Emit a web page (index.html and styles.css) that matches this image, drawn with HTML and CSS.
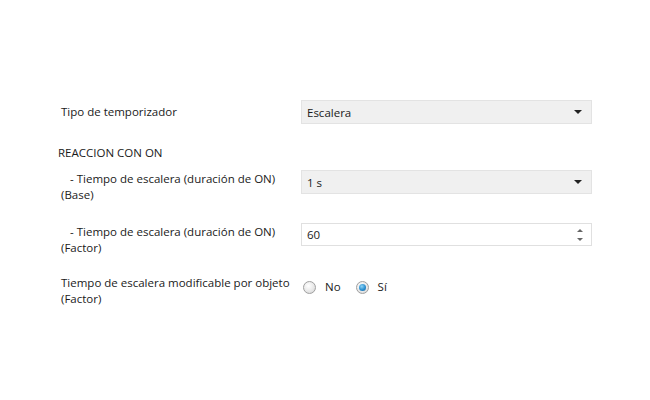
FILE: index.html
```html
<!DOCTYPE html>
<html lang="es">
<head>
<meta charset="utf-8">
<link rel="stylesheet" href="styles.css">
</head>
<body>
<div class="form">
  <div class="row row-single">
    <div class="label">Tipo de temporizador</div>
    <div class="select"><span>Escalera</span><span class="arrow"></span></div>
  </div>

  <div class="section">REACCION CON ON</div>

  <div class="row row-multi">
    <div class="label"><span class="sub">- Tiempo de escalera (duración de ON)</span><br>(Base)</div>
    <div class="select"><span>1 s</span><span class="arrow"></span></div>
  </div>

  <div class="row row-multi row-input">
    <div class="label"><span class="sub">- Tiempo de escalera (duración de ON)</span><br>(Factor)</div>
    <div class="input"><span>60</span><span class="spin"><span class="up"></span><span class="down"></span></span></div>
  </div>

  <div class="row row-radio">
    <div class="label">Tiempo de escalera modificable por objeto<br>(Factor)</div>
    <div class="radios">
      <label class="radio"><span class="dot"></span>No</label>
      <label class="radio"><span class="dot checked"></span>Sí</label>
    </div>
  </div>
</div>
</body>
</html>
```

FILE: styles.css
```css
html, body {
  margin: 0;
  padding: 0;
  background: #ffffff;
}
body {
  width: 650px;
  height: 400px;
  font-family: "Open Sans", "Noto Sans", sans-serif;
  font-size: 11.5px;
  color: #1a1a1a;
}
.form {
  padding: 100px 58px 0 61px;
}
.row {
  display: grid;
  grid-template-columns: 240px 291px;
  align-items: start;
}
.label {
  line-height: 16px;
}
.sub {
  padding-left: 9px;
}
.row-single {
  align-items: center;
}
.section {
  margin: 21px 0 0 -3px;
  line-height: 16px;
}
.row-multi {
  margin-top: 9px;
}
.row-multi .label {
  margin-top: 1px;
}
.row-input {
  margin-top: 20px;
}
.row-radio {
  margin-top: 19px;
}
.select, .input {
  box-sizing: border-box;
  height: 24px;
  display: flex;
  align-items: center;
  justify-content: space-between;
  padding: 0 9px 0 5px;
  border: 1px solid #e3e3e3;
  background: #f0f0f0;
}
.input {
  background: #ffffff;
  height: 23px;
  border-color: #e0e0e0;
  padding-right: 8px;
}
.arrow {
  width: 0;
  height: 0;
  border-left: 4px solid transparent;
  border-right: 4px solid transparent;
  border-top: 4px solid #222;
}
.spin {
  display: flex;
  flex-direction: column;
  gap: 6px;
}
.spin .up, .spin .down {
  width: 0;
  height: 0;
  border-left: 3px solid transparent;
  border-right: 3px solid transparent;
}
.spin .up {
  border-bottom: 3px solid #666;
}
.spin .down {
  border-top: 3px solid #666;
}
.radios {
  display: flex;
  align-items: center;
  padding-top: 4px;
}
.radio {
  display: flex;
  align-items: center;
  line-height: 16px;
  margin-right: 13px;
}
.dot {
  box-sizing: border-box;
  width: 13px;
  height: 13px;
  border-radius: 50%;
  border: 1px solid #a0a0a0;
  background: radial-gradient(circle at 40% 35%, #ffffff 0%, #e6e6e6 60%, #cfcfcf 100%);
  margin: 0 9px 0 2px;
  position: relative;
}
.dot.checked::after {
  content: "";
  position: absolute;
  left: 2px;
  top: 2px;
  width: 7px;
  height: 7px;
  border-radius: 50%;
  background: radial-gradient(circle at 40% 35%, #8fd4f5 0%, #2a8fd0 55%, #1a5f95 100%);
}
```
